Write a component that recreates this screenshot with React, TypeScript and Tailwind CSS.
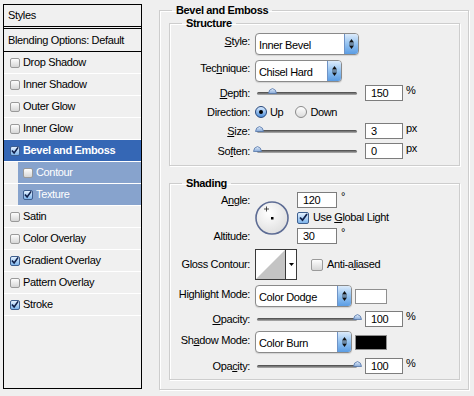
import React from "react";

type Item = { label: string; checked?: boolean; selected?: boolean; sub?: boolean };

const items: Item[] = [
  { label: "Drop Shadow" },
  { label: "Inner Shadow" },
  { label: "Outer Glow" },
  { label: "Inner Glow" },
  { label: "Bevel and Emboss", checked: true, selected: true },
  { label: "Contour", sub: true },
  { label: "Texture", checked: true, sub: true },
  { label: "Satin" },
  { label: "Color Overlay" },
  { label: "Gradient Overlay", checked: true },
  { label: "Pattern Overlay" },
  { label: "Stroke", checked: true },
];

function U({ children }: { children: React.ReactNode }) {
  return <span className="underline underline-offset-[1px]">{children}</span>;
}

function Box({ checked, big }: { checked?: boolean; big?: boolean }) {
  const size = big ? "h-[12px] w-[12px]" : "h-[10px] w-[10px]";
  return (
    <span
      className={`inline-flex shrink-0 items-center justify-center rounded-[2px] border ${size} ${
        checked
          ? "border-[#3e5f8f] bg-linear-to-b from-[#e3f1ff] to-[#7eb4ea]"
          : "border-[#9a9a9a] bg-linear-to-b from-[#fdfdfd] to-[#d6d6d6]"
      }`}
    >
      {checked && (
        <svg width="9" height="9" viewBox="0 0 9 9">
          <path d="M1 4.5 L3.5 7.2 L8 1" fill="none" stroke="#10204a" strokeWidth="1.8" />
        </svg>
      )}
    </span>
  );
}

function Select({ w, value }: { w: string; value: string }) {
  return (
    <div className={`flex h-[22px] ${w} overflow-hidden rounded-[4px] border border-[#8a8a8a] bg-white shadow-[0_1px_1px_rgba(0,0,0,0.12)]`}>
      <div className="flex flex-1 items-center pl-[3px] pt-[2px]">{value}</div>
      <div className="flex w-[14px] items-center justify-center border-l border-[#6f93c6] bg-linear-to-b from-[#dcebfb] via-[#93c2f0] to-[#5b9de4]">
        <svg width="7" height="12" viewBox="0 0 7 12">
          <path d="M3.5 1 L6 4.5 L1 4.5 Z" fill="#111" />
          <path d="M1 6 L6 6" stroke="#333" strokeWidth="0.8" />
          <path d="M3.5 11 L6 7.5 L1 7.5 Z" fill="#111" />
        </svg>
      </div>
    </div>
  );
}

function Slider({ pct }: { pct: number }) {
  return (
    <div className="relative flex h-[16px] w-[104px] items-center px-[2px]">
      <div className="h-[3px] w-full rounded-full bg-linear-to-b from-[#454545] to-[#b4b4b4]" />
      <svg
        className="absolute top-[3px]"
        style={{ left: 2 + pct - 4.5 }}
        width="9"
        height="6"
        viewBox="0 0 9 6"
      >
        <defs>
          <linearGradient id="th" x1="0" y1="0" x2="0" y2="1">
            <stop offset="0" stopColor="#e4eefb" />
            <stop offset="1" stopColor="#86a9d8" />
          </linearGradient>
        </defs>
        <path d="M0.5 5.5 Q0.8 1.2 4.5 0.5 Q8.2 1.2 8.5 5.5 Z" fill="url(#th)" stroke="#5676a8" strokeWidth="0.8" />
      </svg>
    </div>
  );
}

function Num({ value, w = "w-[38px]" }: { value: string; w?: string }) {
  return (
    <div className={`flex h-[16px] ${w} items-center border border-[#7d7d7d] bg-white pl-[5px]`}>{value}</div>
  );
}

function SliderRow({ label, pct, value, unit }: { label: React.ReactNode; pct: number; value: string; unit: string }) {
  return (
    <div className="flex h-[16px] items-center">
      <div className="w-[80px] text-right">{label}</div>
      <div className="ml-[5px] flex items-center">
        <Slider pct={pct} />
        <div className="ml-[6px]">
          <Num value={value} />
        </div>
        <div className="ml-[3px] self-start leading-[10px]">{unit}</div>
      </div>
    </div>
  );
}

function Group({ title, children, className = "" }: { title: string; children: React.ReactNode; className?: string }) {
  return (
    <fieldset className={`border border-[#cdcdcd] shadow-[inset_1px_1px_0_#fff,1px_1px_0_#fff] ${className}`}>
      <legend className="ml-[12px] px-[4px] font-bold leading-[13px]">{title}</legend>
      {children}
    </fieldset>
  );
}

function Radio({ on }: { on?: boolean }) {
  return on ? (
    <span className="flex h-[12px] w-[12px] shrink-0 items-center justify-center rounded-full border border-[#26467a] bg-linear-to-b from-[#d9ebff] to-[#4f8fd8]">
      <span className="h-[4px] w-[4px] rounded-full bg-black" />
    </span>
  ) : (
    <span className="block h-[12px] w-[12px] shrink-0 rounded-full border border-[#8a8a8a] bg-linear-to-b from-white to-[#dcdcdc]" />
  );
}

export default function App() {
  return (
    <div className="flex h-[396px] w-[474px] items-start bg-[#efefef] pt-[4px] font-['Liberation_Sans',Arial,sans-serif] text-[11px] tracking-[-0.35px] text-black">
      {/* styles list */}
      <div className="ml-[3px] flex h-[385px] w-[139px] flex-col border border-black bg-[#f0f0f0]">
        <div className="flex h-[21px] items-center pl-[4px]">Styles</div>
        <div className="h-[3px] border-y border-black" />
        <div className="flex h-[23px] items-center border-b border-black pl-[4px]">Blending Options: Default</div>
        {items.map((it) =>
          it.sub ? (
            <div key={it.label} className="flex h-[22px] border-b border-white pl-[14px]">
              <div className="flex flex-1 items-center gap-[3px] bg-[#87a3cd] pl-[5px] text-white">
                <Box checked={it.checked} />
                <span>{it.label}</span>
              </div>
            </div>
          ) : (
            <div
              key={it.label}
              className={`flex h-[22px] items-center gap-[3px] border-b border-white pl-[6px] ${
                it.selected ? "bg-[#3567b5] font-bold text-white" : ""
              }`}
            >
              <Box checked={it.checked} />
              <span>{it.label}</span>
            </div>
          )
        )}
      </div>

      {/* settings */}
      <fieldset className="ml-[17px] w-[310px] border border-[#cdcdcd] pr-[8px] pb-[9px] pl-[9px] shadow-[inset_1px_1px_0_#fff,1px_1px_0_#fff]">
        <legend className="ml-[3px] px-[4px] font-bold leading-[13px]">Bevel and Emboss</legend>

        <Group title="Structure" className="pt-[3px] pb-[6px]">
          <div className="flex h-[22px] items-center">
            <div className="w-[80px] pb-[6px] text-right">
              <U>S</U>tyle:
            </div>
            <div className="ml-[5px]">
              <Select w="w-[104px]" value="Inner Bevel" />
            </div>
          </div>
          <div className="mt-[5px] flex h-[22px] items-center">
            <div className="w-[80px] pb-[6px] text-right">
              Tec<U>h</U>nique:
            </div>
            <div className="ml-[5px]">
              <Select w="w-[87px]" value="Chisel Hard" />
            </div>
          </div>
          <div className="mt-[3px]">
            <SliderRow label={<><U>D</U>epth:</>} pct={15} value="150" unit="%" />
          </div>
          <div className="mt-[3px] flex h-[16px] items-center">
            <div className="w-[80px] text-right">Direction:</div>
            <div className="ml-[5px] flex items-center">
              <Radio on />
              <span className="ml-[3px]">Up</span>
              <span className="ml-[12px]">
                <Radio />
              </span>
              <span className="ml-[3px]">Down</span>
            </div>
          </div>
          <div className="mt-[3px]">
            <SliderRow label={<><U>S</U>ize:</>} pct={2} value="3" unit="px" />
          </div>
          <div className="mt-[4px]">
            <SliderRow label={<>So<U>f</U>ten:</>} pct={0} value="0" unit="px" />
          </div>
        </Group>

        <Group title="Shading" className="mt-[11px] pt-[2px] pb-[5px]">
          {/* angle / altitude */}
          <div className="flex h-[52px]">
            <div className="flex w-[80px] flex-col justify-between text-right">
              <div className="flex h-[16px] items-center justify-end">
                A<U>n</U>gle:
              </div>
              <div className="flex h-[16px] items-center justify-end">Altitude:</div>
            </div>
            <div className="ml-[5px] flex items-center">
              <svg width="34" height="34" viewBox="0 0 34 34">
                <defs>
                  <radialGradient id="dial" cx="0.4" cy="0.35" r="0.7">
                    <stop offset="0" stopColor="#ffffff" />
                    <stop offset="1" stopColor="#dedede" />
                  </radialGradient>
                </defs>
                <circle cx="17" cy="17" r="16" fill="url(#dial)" stroke="#5d6c94" strokeWidth="1.6" />
                <path d="M11.5 5.5 V10.5 M9 8 H14" stroke="#222" strokeWidth="0.8" />
                <rect x="16" y="16" width="2.5" height="2.5" fill="#000" />
              </svg>
            </div>
            <div className="ml-[8px] flex flex-col">
              <div className="flex items-start">
                <Num value="120" w="w-[40px]" />
                <span className="ml-[4px] leading-[9px]">°</span>
              </div>
              <div className="mt-[3px] flex h-[13px] items-center gap-[4px]">
                <Box checked big />
                <span>
                  Use <U>G</U>lobal Light
                </span>
              </div>
              <div className="mt-[4px] flex items-start">
                <Num value="30" w="w-[40px]" />
                <span className="ml-[4px] leading-[9px]">°</span>
              </div>
            </div>
          </div>

          {/* gloss contour */}
          <div className="mt-[5px] flex h-[31px] items-center">
            <div className="w-[80px] text-right">Gloss Contour:</div>
            <div className="ml-[5px] flex h-[31px] w-[42px] border border-[#3a3a3a] bg-white">
              <svg width="29" height="29" viewBox="0 0 29 29">
                <path d="M0 29 L29 0 L29 29 Z" fill="#c4c4c4" />
              </svg>
              <div className="flex flex-1 items-center justify-center border-l border-[#3a3a3a]">
                <svg width="5" height="3" viewBox="0 0 5 3">
                  <path d="M0 0 H5 L2.5 3 Z" fill="#000" />
                </svg>
              </div>
            </div>
            <div className="ml-[14px] flex items-center gap-[4px]">
              <Box big />
              <span>
                Anti-a<U>l</U>iased
              </span>
            </div>
          </div>

          {/* highlight */}
          <div className="mt-[5px] flex h-[22px] items-center">
            <div className="w-[80px] pb-[4px] text-right">
              Hi<U>g</U>hlight Mode:
            </div>
            <div className="ml-[5px]">
              <Select w="w-[97px]" value="Color Dodge" />
            </div>
            <div className="ml-[3px] h-[15px] w-[32px] border border-[#8f8f8f] bg-white" />
          </div>
          <div className="mt-[4px]">
            <SliderRow label={<><U>O</U>pacity:</>} pct={100} value="100" unit="%" />
          </div>

          {/* shadow */}
          <div className="mt-[4px] flex h-[22px] items-center">
            <div className="w-[80px] pb-[4px] text-right">
              Sh<U>a</U>dow Mode:
            </div>
            <div className="ml-[5px]">
              <Select w="w-[97px]" value="Color Burn" />
            </div>
            <div className="ml-[3px] h-[15px] w-[32px] border border-[#8f8f8f] bg-black" />
          </div>
          <div className="mt-[5px]">
            <SliderRow label={<>Opa<U>c</U>ity:</>} pct={100} value="100" unit="%" />
          </div>
        </Group>
      </fieldset>
    </div>
  );
}
